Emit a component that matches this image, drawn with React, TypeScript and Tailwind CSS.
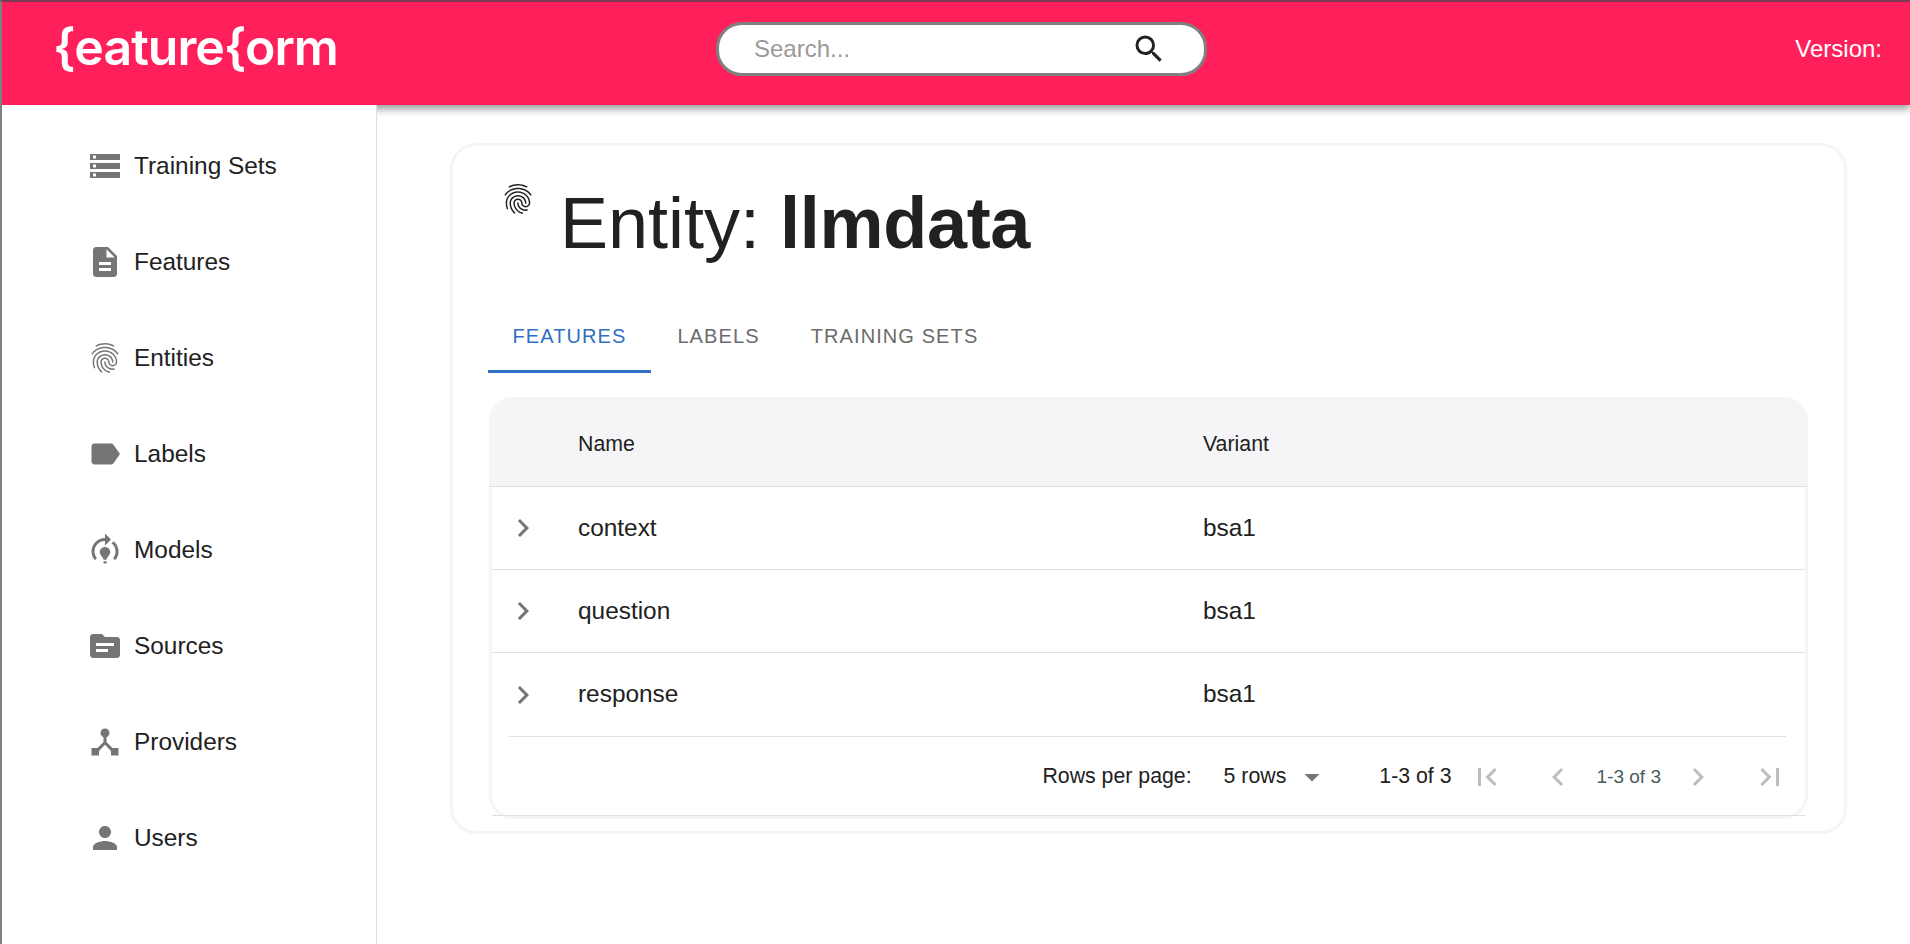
import { ReactNode } from 'react';
import {
  MdStorage,
  MdDescription,
  MdFingerprint,
  MdLabel,
  MdModelTraining,
  MdTopic,
  MdDeviceHub,
  MdPerson,
  MdSearch,
  MdKeyboardArrowRight,
  MdFirstPage,
  MdLastPage,
  MdChevronLeft,
  MdChevronRight,
  MdArrowDropDown,
} from 'react-icons/md';

const NAV_ITEMS: { label: string; icon: ReactNode }[] = [
  { label: 'Training Sets', icon: <MdStorage size={36} /> },
  { label: 'Features', icon: <MdDescription size={36} /> },
  { label: 'Entities', icon: <MdFingerprint size={36} /> },
  { label: 'Labels', icon: <MdLabel size={36} /> },
  { label: 'Models', icon: <MdModelTraining size={36} /> },
  { label: 'Sources', icon: <MdTopic size={36} /> },
  { label: 'Providers', icon: <MdDeviceHub size={36} /> },
  { label: 'Users', icon: <MdPerson size={36} /> },
];

const ROWS = ['context', 'question', 'response'];

const App = () => {
  return (
    <div className="h-[944px] overflow-hidden bg-white font-['Liberation_Sans',Arial,sans-serif] text-[#212121] flex flex-col">
      {/* Header */}
      <header className="h-[105px] shrink-0 relative z-10 bg-[#ff1f5a] border-t-2 border-l-2 border-t-[#7d3a55] border-l-[#7f7f7f] shadow-[0_4px_8px_rgba(0,0,0,0.4)] flex items-center">
        <div className="w-[714px] pl-[51px] pb-[13px] shrink-0 font-['Inter',sans-serif] font-semibold text-[50px] leading-[60px] tracking-[-1px] text-white">
          {'{eature{orm'}
        </div>
        <div className="w-[491px] h-[54px] mt-[-10px] bg-white border-[3px] border-[#808080] rounded-[26px] flex items-center justify-between pl-[35px] pr-[37px]">
          <span className="text-[24px] text-[#9a9a9a]">Search...</span>
          <MdSearch size={36} />
        </div>
        <div className="flex-1 flex justify-end pr-[28px] pb-[9px] text-[24px] text-white">Version:</div>
      </header>

      <div className="flex flex-1 min-h-0">
        {/* Sidebar */}
        <aside className="w-[377px] shrink-0 relative z-20 bg-white border-l-2 border-l-[#7f7f7f] border-r border-r-[#e0e0e0] pt-[13px] pl-[84px]">
          {NAV_ITEMS.map((item) => (
            <div key={item.label} className="h-[96px] flex items-center gap-[11px] text-[24.4px] text-[#212121]">
              <span className="text-[#757575] w-[37px] flex justify-center">{item.icon}</span>
              <span>{item.label}</span>
            </div>
          ))}
        </aside>

        {/* Main */}
        <main className="flex-1 pl-[73px] pr-[63px] pt-[38px]">
          <div className="h-[691px] border-[3px] border-[#f5f5f5] rounded-[26px] pl-[36px] pr-[36px]">
            <div className="h-[155px] flex items-start">
              <MdFingerprint size={36} className="mt-[35px] ml-[11px] text-[#212121]" />
              <h1 className="mt-[37px] ml-[24px] text-[72px] leading-[80px] font-normal">
                Entity: <b className="font-bold tracking-[-0.3px]">llmdata</b>
              </h1>
            </div>

            {/* Tabs */}
            <div className="h-[72px] -ml-px flex text-[20px] tracking-[1.1px] text-[#6b6b6b]">
              <div className="w-[163px] border-b-[3px] border-[#2f6fc4] text-[#2f6fc4] flex items-center justify-center">FEATURES</div>
              <div className="w-[135px] pb-[3px] flex items-center justify-center">LABELS</div>
              <div className="w-[217px] pb-[3px] flex items-center justify-center">TRAINING SETS</div>
            </div>

            {/* Table */}
            <div className="mt-[24px] h-[422px] border-[3px] border-[#f5f5f5] rounded-[24px]">
              <div className="h-[90px] -mx-[3px] -mt-[3px] pt-[6px] bg-[#f5f5f7] rounded-t-[24px] border-b border-[#e0e0e0] flex items-center text-[21.3px]">
                <div className="w-[89px] shrink-0" />
                <div className="w-[625px] shrink-0">Name</div>
                <div>Variant</div>
              </div>
              {ROWS.map((row, i) => (
                <div key={row} className={`h-[83px] flex items-center text-[24.4px] ${i < 2 ? 'border-b border-[#e0e0e0]' : ''}`}>
                  <div className="w-[86px] shrink-0 pl-[13px] text-[#757575]">
                    <MdKeyboardArrowRight size={36} />
                  </div>
                  <div className="w-[625px] shrink-0">{row}</div>
                  <div>bsa1</div>
                </div>
              ))}
              <div className="h-[79px] pt-[2px] ml-[17px] mr-[19px] border-t border-[#e0e0e0] flex items-center justify-end text-[21.3px]">
                <span>Rows per page:</span>
                <span className="ml-[32px]">5 rows</span>
                <MdArrowDropDown size={36} className="ml-[8px] text-[#757575]" />
                <span className="ml-[49px]">1-3 of 3</span>
                <MdFirstPage size={36} className="ml-[17px] text-[#bdbdbd]" />
                <MdChevronLeft size={36} className="ml-[35px] text-[#bdbdbd]" />
                <span className="ml-[21px] mr-[19px] text-[19px] text-[#4a5a5a]">1-3 of 3</span>
                <MdChevronRight size={36} className="text-[#bdbdbd]" />
                <MdLastPage size={36} className="ml-[36px] mr-[-2px] text-[#bdbdbd]" />
              </div>
              <div className="border-t border-[#e0e0e0]" />
            </div>
          </div>
        </main>
      </div>
    </div>
  );
};

export default App;
